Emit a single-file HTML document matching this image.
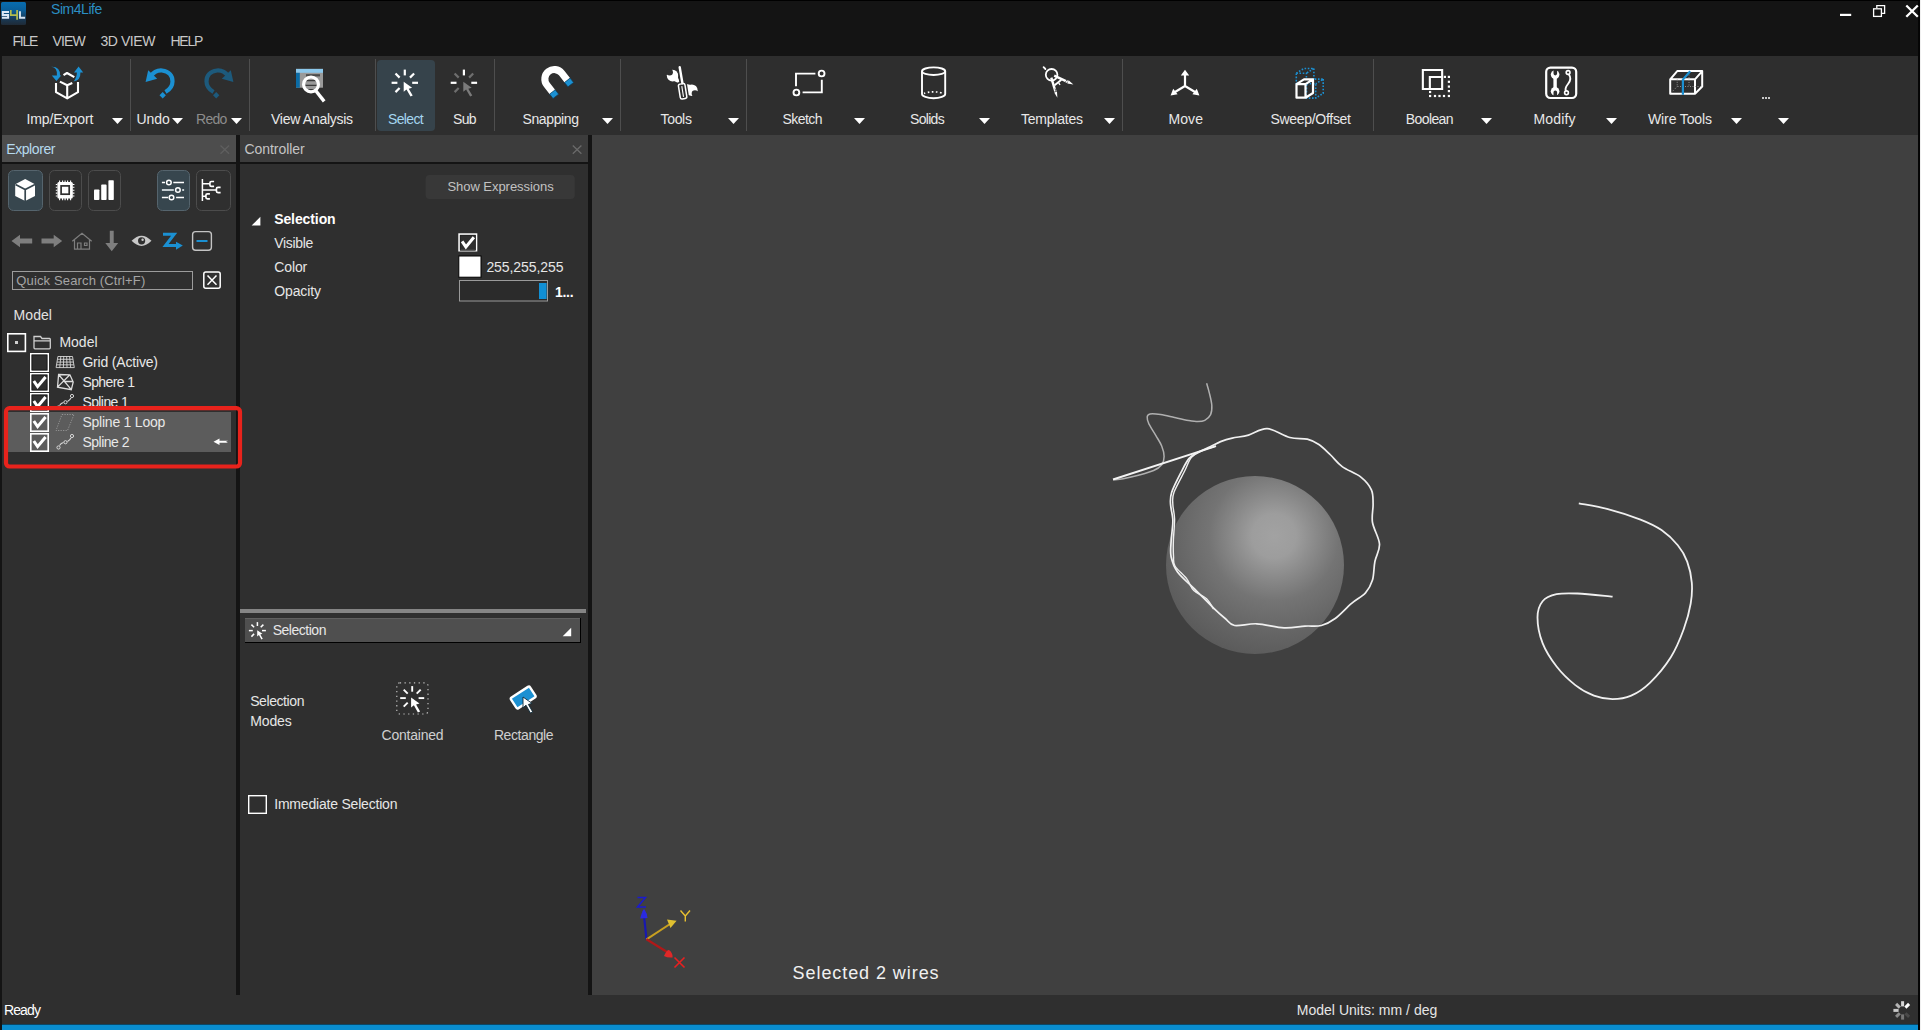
<!DOCTYPE html><html><head><meta charset="utf-8"><style>
html,body{margin:0;padding:0;width:1921px;height:1030px;overflow:hidden;background:#141414;font-family:"Liberation Sans",sans-serif}
body>div{position:absolute}
.t{white-space:nowrap;font-family:"Liberation Sans",sans-serif}
svg{position:absolute;left:0;top:0}
</style></head><body>
<div style="left:0px;top:0px;width:1921px;height:1030px;background:#141414;"></div>
<div style="left:0px;top:0px;width:1920px;height:1px;background:#000;"></div>
<div style="left:1920px;top:0px;width:1px;height:1030px;background:#f0f0f0;"></div>
<div style="left:1918px;top:1px;width:2px;height:1029px;background:#050505;"></div>
<div style="left:2px;top:56px;width:1916px;height:79px;background:#2e2e2e;"></div>
<div style="left:2px;top:135px;width:234px;height:27px;background:#4d4d4d;"></div>
<div style="left:2px;top:164px;width:234px;height:831px;background:#2f2f2f;"></div>
<div style="left:240px;top:135px;width:348px;height:27px;background:#3c3c3c;"></div>
<div style="left:240px;top:164px;width:348px;height:831px;background:#2f2f2f;"></div>
<div style="left:592px;top:135px;width:1326px;height:860px;background:#404040;"></div>
<div style="left:2px;top:995px;width:1916px;height:30px;background:#2f2f2f;"></div>
<div style="left:2px;top:1024px;width:1916px;height:1px;background:#0b4766;"></div>
<div style="left:2px;top:1025px;width:1916px;height:5px;background:#0a8dcf;"></div>
<svg width="1921" height="1030" viewBox="0 0 1921 1030"><defs><linearGradient id="lg" x1="0" y1="0" x2="0" y2="1"><stop offset="0" stop-color="#086db0"/><stop offset="0.35" stop-color="#0a5f9a"/><stop offset="0.7" stop-color="#183c5a"/><stop offset="1" stop-color="#1f2a36"/></linearGradient>
<radialGradient id="sph" cx="0.62" cy="0.36" r="0.75"><stop offset="0" stop-color="#a2a2a2"/><stop offset="0.22" stop-color="#9a9a9a"/><stop offset="0.55" stop-color="#757575"/><stop offset="1" stop-color="#5c5c5c"/></radialGradient></defs>
<rect x="1" y="2" width="25" height="23" rx="1.5" fill="url(#lg)"/>
<path d="M9 12.1H2.8V15H8.1V17.8H1.9" stroke="#dce8f4" stroke-width="2" fill="none"/>
<path d="M10.8 10V15.2H17M17.1 10V19.8" stroke="#b4bc4c" stroke-width="1.7" fill="none"/>
<path d="M20 11.3V17.8H25.1" stroke="#d4e2f0" stroke-width="1.9" fill="none"/>
<rect x="1840" y="13.8" width="11.2" height="2.2" fill="#fff"/>
<path d="M1876.8 8V5.6H1884.6V13.4H1882" stroke="#fff" stroke-width="1.3" fill="none"/><rect x="1873.6" y="8.8" width="7.8" height="7.6" stroke="#fff" stroke-width="1.3" fill="none"/>
<path d="M1906.3 5.5l11.5 11.2M1917.8 5.5l-11.5 11.2" stroke="#fff" stroke-width="2.3"/>
<rect x="130" y="59" width="1" height="72" fill="#4e4e4e"/>
<rect x="249" y="59" width="1" height="72" fill="#4e4e4e"/>
<rect x="375" y="59" width="1" height="72" fill="#4e4e4e"/>
<rect x="494" y="59" width="1" height="72" fill="#4e4e4e"/>
<rect x="620" y="59" width="1" height="72" fill="#4e4e4e"/>
<rect x="746" y="59" width="1" height="72" fill="#4e4e4e"/>
<rect x="1122" y="59" width="1" height="72" fill="#4e4e4e"/>
<rect x="1373" y="59" width="1" height="72" fill="#4e4e4e"/>
<rect x="377" y="60" width="58" height="71" rx="4" fill="#36434b"/>
<path d="M112 118h11l-5.5 6z" fill="#fff"/>
<path d="M172 118h11l-5.5 6z" fill="#fff"/>
<path d="M231 118h11l-5.5 6z" fill="#fff"/>
<path d="M602 118h11l-5.5 6z" fill="#fff"/>
<path d="M728 118h11l-5.5 6z" fill="#fff"/>
<path d="M854 118h11l-5.5 6z" fill="#fff"/>
<path d="M979 118h11l-5.5 6z" fill="#fff"/>
<path d="M1104 118h11l-5.5 6z" fill="#fff"/>
<path d="M1481 118h11l-5.5 6z" fill="#fff"/>
<path d="M1606 118h11l-5.5 6z" fill="#fff"/>
<path d="M1731 118h11l-5.5 6z" fill="#fff"/>
<path d="M1778 118h11l-5.5 6z" fill="#fff"/>
<rect x="1762" y="97" width="2" height="2" fill="#c8c8c8"/>
<rect x="1765" y="97" width="2" height="2" fill="#c8c8c8"/>
<rect x="1768" y="97" width="2" height="2" fill="#c8c8c8"/>
<path d="M56 83V92.2L67.2 98.4 78 92.2V82M59.9 81.6L67.2 85.2 72.3 83M67.2 85V98M63.5 75.2L67 73 74.3 77.2" stroke="#fff" fill="none" stroke-width="2.1" stroke-linejoin="round"/>
<path d="M51.2 66.8Q57.6 67.6 56.9 75.5H51.8L56.4 81 61.2 75.5H60Q60.4 66.4 51.2 66.8Z" fill="#1b90d2"/>
<path d="M73.5 81.5Q76.8 78 76.9 72.6H74L78.6 66.6 83.2 72.6H80.4Q80.8 80.4 73.5 81.5Z" fill="#1b90d2"/>
<path d="M150.5 76.5Q155 70 162 70.5 172.5 72 172.5 81.5 172.5 88 165.5 92" stroke="#1b90d2" stroke-width="4.2" fill="none"/>
<path d="M145.6 82L148.2 70.2 157.2 78.8Z" fill="#1b90d2"/><rect x="160.5" y="93" width="4.5" height="4.5" transform="rotate(45 162.7 95.2)" fill="#1b90d2"/>
<path d="M228.5 76.5Q224 70 217 70.5 206.5 72 206.5 81.5 206.5 88 213.5 92" stroke="#1d5a7c" stroke-width="4.2" fill="none"/>
<path d="M233.4 82L230.8 70.2 221.8 78.8Z" fill="#1d5a7c"/><rect x="214" y="93" width="4.5" height="4.5" transform="rotate(45 216.2 95.2)" fill="#1d5a7c"/>
<rect x="296" y="68.9" width="27" height="18.8" fill="#9a9a9a"/><rect x="296" y="68.9" width="27" height="3.9" fill="#8cc8ec"/><rect x="296" y="72.8" width="3.8" height="14.9" fill="#0b6ca6"/><rect x="306" y="74.2" width="14" height="2.2" fill="#4a4a4a"/><circle cx="311" cy="84.4" r="6" fill="#9a9a9a"/><path d="M305 80.6H317M304.5 85.4H317.5M305.5 89.6H316.5" stroke="#3a3a3a" stroke-width="1.3"/><circle cx="311" cy="84.4" r="7.4" stroke="#fff" stroke-width="3.2" fill="none"/><path d="M315.8 90.8L324.2 101.4" stroke="#fff" stroke-width="3.4"/>
<path d="M404.8 75.4L404.8 69.6" stroke="#fff" stroke-width="2.2"/><path d="M410.0 77.6L414.1 73.5" stroke="#fff" stroke-width="2.2"/><path d="M412.2 82.8L418.0 82.8" stroke="#fff" stroke-width="2.2"/><path d="M397.4 82.8L391.6 82.8" stroke="#fff" stroke-width="2.2"/><path d="M399.6 77.6L395.5 73.5" stroke="#fff" stroke-width="2.2"/><path d="M399.6 88.0L395.5 92.1" stroke="#fff" stroke-width="2.2"/>
<path d="M403.70 81.80 L403.70 91.80 L406.50 89.40 L410.50 96.60 L412.70 95.60 L408.70 88.70 L412.10 87.70Z" fill="#fff"/>
<path d="M463.9 75.4L463.9 69.6" stroke="#fff" stroke-width="2.2"/><path d="M469.1 77.6L473.2 73.5" stroke="#6e6e6e" stroke-width="2.2"/><path d="M471.3 82.8L477.1 82.8" stroke="#fff" stroke-width="2.2"/><path d="M456.5 82.8L450.7 82.8" stroke="#fff" stroke-width="2.2"/><path d="M458.7 77.6L454.6 73.5" stroke="#6e6e6e" stroke-width="2.2"/><path d="M458.7 88.0L454.6 92.1" stroke="#6e6e6e" stroke-width="2.2"/>
<path d="M463.30 81.80 L463.30 91.80 L466.10 89.40 L470.10 96.60 L472.30 95.60 L468.30 88.70 L471.70 87.70Z" fill="#7a7a7a"/>
<g transform="translate(554.3 79) rotate(-38)"><path d="M-9.45 9.2V0A9.45 9.45 0 0 1 9.45 0V9.2" stroke="#fff" stroke-width="7.1" fill="none"/><rect x="-13" y="9" width="7.1" height="5.6" fill="#1b90d2" stroke="#0d3c58" stroke-width="0.6"/><rect x="5.9" y="9" width="7.1" height="5.6" fill="#1b90d2" stroke="#0d3c58" stroke-width="0.6"/></g>
<circle cx="672.6" cy="75.6" r="5.8" fill="#fff"/><circle cx="669.6" cy="72.2" r="3.3" fill="#2e2e2e"/><path d="M671 79.5L676.5 74 680 82 678.2 83Z" fill="#fff"/><circle cx="691.8" cy="90.2" r="5.8" fill="#fff"/><circle cx="695" cy="93.6" r="3.3" fill="#2e2e2e"/><path d="M686.5 84L693 85.5 688.5 92 685.5 85.5Z" fill="#fff"/>
<path d="M679.6 66.5L682.2 83" stroke="#2e2e2e" stroke-width="5.5"/><g transform="rotate(-9 682.6 91.2)"><rect x="678.9" y="83.4" width="7.4" height="15.6" rx="2" stroke="#2e2e2e" stroke-width="3.5" fill="#2e2e2e"/></g>
<path d="M679.7 67.2L682.4 83" stroke="#fff" stroke-width="2.4" stroke-linecap="round" fill="none"/><g transform="rotate(-9 682.6 91.2)"><rect x="679.3" y="83.8" width="6.6" height="15" rx="1.8" stroke="#fff" stroke-width="1.5" fill="none"/><path d="M682.6 86V97" stroke="#fff" stroke-width="1.1"/></g>
<path d="M815.4 73.6H796V86.3M802.6 92.4H821.8V79.7" stroke="#fff" stroke-width="1.9" fill="none"/><circle cx="821.6" cy="73.5" r="2.9" stroke="#fff" stroke-width="1.9" fill="none"/><circle cx="796.4" cy="92.5" r="2.9" stroke="#fff" stroke-width="1.9" fill="none"/>
<ellipse cx="933.6" cy="71.2" rx="11.6" ry="3.8" stroke="#fff" stroke-width="1.9" fill="none"/><path d="M922 71.2V94A11.6 4.2 0 0 0 945.2 94V71.2" stroke="#fff" stroke-width="1.9" fill="none"/><path d="M924 93.5A11 3.2 0 0 1 943.2 93.5" stroke="#fff" stroke-width="1.6" stroke-dasharray="1.6 2.4" fill="none"/>
<circle cx="1051.6" cy="74.8" r="5.8" stroke="#fff" stroke-width="1.8" fill="none"/><path d="M1043.6 67.2L1045.4 69" stroke="#fff" stroke-width="1.8" stroke-linecap="round"/><path d="M1051.3 77.6L1055.4 91.3" stroke="#fff" stroke-width="2.4"/><path d="M1054.2 92.5L1057.4 97.8 1057 91.6Z" fill="#fff"/><path d="M1054.2 75.6L1067.6 81.8" stroke="#fff" stroke-width="2.4"/><path d="M1068.6 80.2L1073.4 84.4 1067.3 83.6Z" fill="#fff"/><path d="M1054.6 85.2L1061.4 79.8" stroke="#fff" stroke-width="1.8"/><path d="M1058.5 82.5l1.5 2.5" stroke="#fff" stroke-width="1.4"/><path d="M1055.8 90.8l-.8-2.2M1067.2 80l-1.8 1.6" stroke="#2e2e2e" stroke-width="0.8"/>
<path d="M1185 86V74M1185 86L1175 92M1185 86L1195 92" stroke="#fff" stroke-width="2.2"/><path d="M1180.8 75.5L1185 69.8 1189.2 75.5Z M1170.6 95.5L1173.2 88.8 1177.6 94.2Z M1199.4 95.5L1196.8 88.8 1192.4 94.2Z" fill="#fff"/>
<path d="M1296.3 73.2H1306.3999999999999V83.2H1296.3Z M1296.3 73.2L1303.8 68.5H1313.8999999999999L1306.3999999999999 73.2 M1313.8999999999999 68.5V78.5L1306.3999999999999 83.2" stroke="#1b90d2" stroke-width="1.6" stroke-dasharray="1.6 1.6" fill="none"/>
<path d="M1306.5 83.8H1315.7V98.1H1306.5Z M1306.5 83.8L1314.0 79.1H1323.2L1315.7 83.8 M1323.2 79.1V93.39999999999999L1315.7 98.1" stroke="#1b90d2" stroke-width="1.6" stroke-dasharray="1.6 1.6" fill="none"/>
<path d="M1296.5 84.1H1305.5V97.69999999999999H1296.5Z M1296.5 84.1L1304.0 79.39999999999999H1313.0L1305.5 84.1 M1313.0 79.39999999999999V92.99999999999999L1305.5 97.69999999999999" stroke="#fff" stroke-width="2.2" fill="#2e2e2e" stroke-linejoin="round"/>
<path d="M1422.85 69.95H1442.15V88.95H1422.85Z M1429.85 88.95V76.95H1442.15" stroke="#fff" stroke-width="2.1" fill="none"/><rect x="1443.8" y="75.8" width="2.2" height="2.2" fill="#fff"/><rect x="1447.8" y="75.8" width="2.2" height="2.2" fill="#fff"/><rect x="1447.8" y="80.7" width="2.2" height="2.2" fill="#fff"/><rect x="1447.8" y="85.5" width="2.2" height="2.2" fill="#fff"/><rect x="1447.8" y="90.0" width="2.2" height="2.2" fill="#fff"/><rect x="1447.8" y="94.9" width="2.2" height="2.2" fill="#fff"/><rect x="1429.0" y="94.9" width="2.2" height="2.2" fill="#fff"/><rect x="1433.9" y="94.9" width="2.2" height="2.2" fill="#fff"/><rect x="1438.4" y="94.9" width="2.2" height="2.2" fill="#fff"/><rect x="1442.9" y="94.9" width="2.2" height="2.2" fill="#fff"/><rect x="1429.0" y="90.9" width="2.2" height="2.2" fill="#fff"/>
<rect x="1546.2" y="67.6" width="30" height="30.4" rx="4.2" stroke="#fff" stroke-width="2.2" fill="none"/><circle cx="1555.1" cy="74.6" r="4.3" fill="#fff"/><circle cx="1555.1" cy="91.2" r="4.3" fill="#fff"/><rect x="1553.4" y="76" width="3.4" height="14" fill="#fff"/><path d="M1553.5 69.5V73.6A1.8 1.8 0 0 0 1557.1 73.6V69.5Z M1553.5 96.5V92.2A1.8 1.8 0 0 1 1557.1 92.2V96.5Z" fill="#2e2e2e"/><circle cx="1568.1" cy="72.5" r="1.9" stroke="#fff" stroke-width="1.6" fill="none"/><circle cx="1566.5" cy="92.8" r="1.9" stroke="#fff" stroke-width="1.6" fill="none"/><path d="M1568.8 74.3C1571.5 78 1570.5 81 1568 84C1565.2 87.5 1564.8 89 1566 91" stroke="#fff" stroke-width="1.9" fill="none"/>
<path d="M1670.2 79.3H1695V93.8H1670.2Z M1670.2 79.3L1677.2 71.1H1702.2L1695 79.3 M1702.2 71.1V86.5L1695 93.8" stroke="#fff" stroke-width="2" fill="none" stroke-linejoin="round"/><path d="M1677.2 79.3V86.5H1702 M1677.2 86.5L1670.2 93.8 M1689 72V86.5" stroke="#aaa" stroke-width="0.8" stroke-dasharray="1 1.5" fill="none"/><path d="M1682.9 94.8V79.6L1690.2 71.2" stroke="#1b90d2" stroke-width="2.2" fill="none"/>
<path d="M220.5 145.5l8.6 8.2M229.1 145.5l-8.6 8.2" stroke="#5f5f5f" stroke-width="1.3"/>
<path d="M572.8 145.5l8.6 8.2M581.4 145.5l-8.6 8.2" stroke="#6a6a6a" stroke-width="1.3"/>
<rect x="8.5" y="170.5" width="34" height="40" rx="5" fill="#37464e" stroke="#55646d" stroke-width="1"/>
<rect x="49.5" y="170.5" width="32" height="40" rx="5" fill="none" stroke="#4c4c4c" stroke-width="1"/>
<rect x="88.5" y="170.5" width="32" height="40" rx="5" fill="none" stroke="#4c4c4c" stroke-width="1"/>
<rect x="157.5" y="170.5" width="32" height="40" rx="5" fill="#37464e" stroke="#55646d" stroke-width="1"/>
<rect x="196.5" y="170.5" width="34" height="40" rx="5" fill="none" stroke="#4c4c4c" stroke-width="1"/>
<path d="M25.2 179L35 184.2V196L25.2 201 15.2 196V184.2Z" fill="#fff"/><path d="M15.5 184.5L25.2 189.5 35 184.5M25.2 189.5V201" stroke="#37464e" stroke-width="1.7" fill="none"/>
<rect x="57.4" y="182" width="15.4" height="16.4" rx="1.5" fill="#fff"/><rect x="61.1" y="185.9" width="8.1" height="8.3" stroke="#2f2f2f" stroke-width="1.7" fill="none"/><path d="M59.6 180.6V200.2M62.6 180.6V200.2M65.1 180.6V200.2M67.6 180.6V200.2M70.6 180.6V200.2M55.8 184.5H74.4M55.8 187.3H74.4M55.8 190.2H74.4M55.8 193.1H74.4M55.8 196H74.4" stroke="#fff" stroke-width="1.1" stroke-dasharray="1.6 20"/><path d="M59.6 200.2V198M62.6 200.2V198M65.1 200.2V198M67.6 200.2V198M70.6 200.2V198M74.4 184.5H72.4M74.4 187.3H72.4M74.4 190.2H72.4M74.4 193.1H72.4M74.4 196H72.4" stroke="#fff" stroke-width="1.1"/>
<rect x="94" y="189.5" width="5.4" height="10.5" rx="0.8" fill="#fff"/><rect x="101.2" y="184.6" width="5.4" height="15.4" rx="0.8" fill="#fff"/><rect x="108.4" y="180.2" width="5.4" height="19.8" rx="0.8" fill="#fff"/>
<path d="M161.9 182.55H165M173.3 182.55H184M176.1 197.5H184M161.9 197.5H168" stroke="#fff" stroke-width="1.5"/><path d="M161.9 190H173.8" stroke="#c6ced2" stroke-width="2"/><rect x="182.2" y="189" width="1.9" height="2" fill="#c6ced2"/><circle cx="168.9" cy="182.55" r="2.3" stroke="#fff" stroke-width="1.5" fill="none"/><circle cx="177.9" cy="190" r="2.3" stroke="#fff" stroke-width="1.5" fill="none"/><circle cx="171.5" cy="197.5" r="2.3" stroke="#fff" stroke-width="1.5" fill="none"/>
<path d="M202.4 179V201M202.4 183.7H209.4M202.4 190H216M202.4 196.3H205.8" stroke="#fff" stroke-width="1.5"/><path d="M214.1 181.5H211.5Q209.9 181.5 209.9 183V184.9Q209.9 186.4 211.5 186.4H214.1M220.6 187.4H218Q216.4 187.4 216.4 188.9V191.1Q216.4 192.7 218 192.7H220.6M209.9 193.8H207.4Q205.9 193.8 205.9 195.3V197.3Q205.9 198.8 207.4 198.8H209.9" stroke="#fff" stroke-width="1.7" fill="none"/>
<path d="M11.5 241L20 234.7V238.5H32.2V243.5H20V247.3Z" fill="#7e7e7e"/>
<path d="M62.2 241L53.7 234.7V238.5H41.5V243.5H53.7V247.3Z" fill="#7e7e7e"/>
<path d="M72.3 241.3L82 233.3 91.7 241.3M74.5 240V249.2H89.5V240 M77.5 249.2V243H81V249.2 M84.5 243H87V245.5H84.5Z" stroke="#7e7e7e" stroke-width="1.2" fill="none"/>
<path d="M109.8 230.7H113.7V243H118.2L111.75 251.3 105.3 243H109.8Z" fill="#7e7e7e"/>
<path d="M131.6 240.8Q141.5 230.5 151.5 240.8 141.5 251 131.6 240.8Z" fill="#c8c8c8"/><circle cx="141.6" cy="240.8" r="3.6" fill="#2f2f2f"/><circle cx="142.6" cy="239.8" r="1.2" fill="#c8c8c8"/>
<path d="M163 234.2H174.2L165.5 245.5H176" stroke="#1b90d2" stroke-width="3" fill="none" stroke-linejoin="miter"/><path d="M176 241.8L182.8 245.5 176 249.7Z" fill="#1b90d2"/>
<rect x="192.6" y="231.6" width="18.8" height="18.6" rx="3" stroke="#c4c4c4" stroke-width="1.4" fill="none"/><path d="M196.5 241H207.5" stroke="#1b90d2" stroke-width="2"/>
<rect x="12.5" y="271.5" width="180" height="18" stroke="#9c9c9c" stroke-width="1" fill="none"/>
<rect x="203.8" y="272" width="16.4" height="16.2" rx="2" stroke="#fff" stroke-width="1.5" fill="none"/><path d="M207.5 275.5l9 9.2M216.5 275.5l-9 9.2" stroke="#fff" stroke-width="1.5"/>
<rect x="8" y="412" width="223" height="40" fill="#5c5c5c"/>
<rect x="7.8" y="333.8" width="17.6" height="17.6" stroke="#fff" stroke-width="1.6" fill="none"/><rect x="15" y="341" width="3" height="3" fill="#d0d0d0"/>
<path d="M34 336.5H40.5L42 338.5H49.5A1 1 0 0 1 50.3 339.5V347.8A1 1 0 0 1 49.3 348.8H35A1 1 0 0 1 34 347.8Z M34 340.8H50.3" stroke="#cfcfcf" stroke-width="1.3" fill="none"/>
<rect x="30.8" y="353.8" width="17.4" height="17.4" stroke="#fff" stroke-width="1.6" fill="none"/><rect x="32" y="355" width="15" height="15" stroke="#181818" stroke-width="0.8" fill="none"/>
<rect x="30.8" y="373.8" width="17.4" height="17.4" stroke="#fff" stroke-width="1.6" fill="none"/><rect x="32" y="375" width="15" height="15" stroke="#181818" stroke-width="0.8" fill="none"/><path d="M33.8 381L37.6 386.6L45.6 377" stroke="#fff" stroke-width="3" fill="none"/>
<rect x="30.8" y="393.8" width="17.4" height="17.4" stroke="#fff" stroke-width="1.6" fill="none"/><rect x="32" y="395" width="15" height="15" stroke="#181818" stroke-width="0.8" fill="none"/><path d="M33.8 401L37.6 406.6L45.6 397" stroke="#fff" stroke-width="3" fill="none"/>
<rect x="30.8" y="413.8" width="17.4" height="17.4" stroke="#fff" stroke-width="1.6" fill="none"/><path d="M33.8 421L37.6 426.6L45.6 417" stroke="#fff" stroke-width="3" fill="none"/>
<rect x="30.8" y="433.8" width="17.4" height="17.4" stroke="#fff" stroke-width="1.6" fill="none"/><path d="M33.8 441L37.6 446.6L45.6 437" stroke="#fff" stroke-width="3" fill="none"/>
<path d="M57.90 356.5L56.10 367.6M60.82 356.5L59.74 367.6M63.74 356.5L63.38 367.6M66.66 356.5L67.02 367.6M69.58 356.5L70.66 367.6M72.50 356.5L74.30 367.6M57.90 356.50H72.50M57.45 359.27H72.95M57.00 362.05H73.40M56.55 364.83H73.85M56.10 367.60H74.30" stroke="#d8d8d8" stroke-width="0.9" fill="none"/>
<path d="M58.6 374.5L69.9 374.8 73.2 382.1 71.3 389.7 57.5 387.1Z M58.6 374.5L71.3 389.7 M69.9 374.8L57.5 387.1 M64.5 381.5H73" stroke="#dcdcdc" stroke-width="1.3" fill="none"/>
<circle cx="58.5" cy="407.5" r="1.6" stroke="#d8d8d8" stroke-width="1" fill="none"/><circle cx="65.5" cy="402.2" r="1.6" stroke="#d8d8d8" stroke-width="1" fill="none"/><circle cx="72" cy="396" r="1.6" stroke="#d8d8d8" stroke-width="1" fill="none"/><path d="M59.5 405.5Q61 403 63.5 402.5M67.5 401.5Q70 400 71 398" stroke="#d8d8d8" stroke-width="1.1" fill="none"/>
<circle cx="58.5" cy="447.5" r="1.6" stroke="#d8d8d8" stroke-width="1" fill="none"/><circle cx="65.5" cy="442.2" r="1.6" stroke="#d8d8d8" stroke-width="1" fill="none"/><circle cx="72" cy="436" r="1.6" stroke="#d8d8d8" stroke-width="1" fill="none"/><path d="M59.5 445.5Q61 443 63.5 442.5M67.5 441.5Q70 440 71 438" stroke="#d8d8d8" stroke-width="1.1" fill="none"/>
<path d="M62 414.5H74L67.5 430.5H56Z" stroke="#9a9a9a" stroke-width="0.9" stroke-dasharray="1.2 1.3" fill="none"/>
<path d="M213.5 441.8L219.5 438.5V440.8H228L226 441.8 228 442.8H219.5V445Z" fill="#fff"/>
<rect x="425.6" y="175" width="149.2" height="24" rx="4" fill="#383838"/>
<path d="M251.6 225.5H260.4V216.8Z" fill="#fff"/>
<rect x="459.1" y="234.10000000000002" width="17.4" height="16.6" stroke="#fff" stroke-width="1.6" fill="none"/><rect x="460.3" y="235.3" width="15" height="15" stroke="#222" stroke-width="0.8" fill="none"/><path d="M462.1 241.3L465.90000000000003 246.9L473.90000000000003 237.3" stroke="#fff" stroke-width="3" fill="none"/>
<rect x="458.8" y="256" width="22.2" height="21.2" fill="#fff" stroke="#000" stroke-width="1"/>
<rect x="459.5" y="280.5" width="88" height="20.5" fill="#2b2b2b" stroke="#9a9a9a" stroke-width="1"/><rect x="539" y="283" width="7.6" height="16" fill="#118fd4"/>
<rect x="240" y="609" width="346" height="4" fill="#858585"/>
<rect x="245" y="618" width="336" height="25" fill="#000"/><rect x="245" y="618" width="335" height="24" fill="#4f4f4f"/><rect x="245" y="618" width="335" height="1" fill="#606060"/>
<path d="M257.4 626.0L257.4 622.1" stroke="#fff" stroke-width="1.5"/><path d="M260.7 627.3L263.4 624.6" stroke="#fff" stroke-width="1.5"/><path d="M262.0 630.6L265.9 630.6" stroke="#fff" stroke-width="1.5"/><path d="M252.8 630.6L248.9 630.6" stroke="#fff" stroke-width="1.5"/><path d="M254.1 627.3L251.4 624.6" stroke="#fff" stroke-width="1.5"/><path d="M254.1 633.9L251.4 636.6" stroke="#fff" stroke-width="1.5"/>
<path d="M257.20 630.20 L257.20 636.40 L258.94 634.91 L261.42 639.38 L262.78 638.76 L260.30 634.48 L262.41 633.86Z" fill="#fff"/>
<path d="M562.7 636.3H571.2V627.8Z" fill="#fff"/>
<rect x="396.8" y="682.8" width="31.2" height="31.2" rx="3" stroke="#bdbdbd" stroke-width="1.2" stroke-dasharray="1.3 3.4" fill="none"/>
<path d="M412.2 691.7L412.2 686.1" stroke="#fff" stroke-width="1.9"/><path d="M416.7 693.6L420.7 689.6" stroke="#fff" stroke-width="1.9"/><path d="M418.6 698.1L424.2 698.1" stroke="#fff" stroke-width="1.9"/><path d="M405.8 698.1L400.2 698.1" stroke="#fff" stroke-width="1.9"/><path d="M407.7 693.6L403.7 689.6" stroke="#fff" stroke-width="1.9"/><path d="M407.7 702.6L403.7 706.6" stroke="#fff" stroke-width="1.9"/>
<path d="M411.10 697.60 L411.10 707.60 L413.90 705.20 L417.90 712.40 L420.10 711.40 L416.10 704.50 L419.50 703.50Z" fill="#fff"/>
<g transform="rotate(-33 523.2 697.5)"><rect x="511.9" y="691.2" width="22.6" height="12.6" rx="1.5" fill="#1b90d2" stroke="#fff" stroke-width="2.4"/></g>
<path d="M523.00 697.00 L523.00 707.80 L526.02 705.21 L530.34 712.98 L532.72 711.90 L528.40 704.45 L532.07 703.37Z" fill="#fff" stroke="#0d2a3a" stroke-width="0.9"/>
<rect x="248.7" y="795.7" width="17.6" height="17.6" stroke="#fff" stroke-width="1.4" fill="none"/>
<path d="M1902.6 1006.4L1902.6 1001.2" stroke="#d8d8d8" stroke-width="3"/>
<path d="M1905.4 1007.6L1909.1 1003.9" stroke="#ffffff" stroke-width="3"/>
<path d="M1905.4 1013.2L1909.1 1016.9" stroke="#4a4a4a" stroke-width="3"/>
<path d="M1902.6 1014.4L1902.6 1019.6" stroke="#777" stroke-width="3"/>
<path d="M1899.8 1013.2L1896.1 1016.9" stroke="#8a8a8a" stroke-width="3"/>
<path d="M1898.6 1010.4L1893.4 1010.4" stroke="#c8c8c8" stroke-width="3"/>
<path d="M1899.8 1007.6L1896.1 1003.9" stroke="#b4b4b4" stroke-width="3"/>
<radialGradient id="sph2" gradientUnits="userSpaceOnUse" cx="1274" cy="536" r="130"><stop offset="0" stop-color="#a2a2a2"/><stop offset="0.17" stop-color="#9d9d9d"/><stop offset="0.32" stop-color="#8a8a8a"/><stop offset="0.5" stop-color="#747474"/><stop offset="0.75" stop-color="#656565"/><stop offset="1" stop-color="#585858"/></radialGradient>
<circle cx="1255" cy="565" r="89" fill="url(#sph2)"/>
<path d="M1267.2 428.7C1274.1 429.1 1283.1 435.8 1289.8 437.5C1296.5 439.2 1302.4 438.0 1307.3 439.2C1312.2 440.4 1315.0 441.9 1318.9 444.5C1322.8 447.1 1326.7 451.3 1330.6 455.0C1334.5 458.7 1337.2 462.9 1342.2 466.6C1347.2 470.3 1356.0 473.2 1360.9 477.1C1365.8 481.0 1369.4 485.4 1371.4 489.9C1373.4 494.4 1372.9 498.5 1373.1 503.9C1373.3 509.3 1371.4 515.8 1372.5 522.5C1373.6 529.2 1379.1 537.5 1379.5 544.0C1379.9 550.5 1376.1 555.5 1374.9 561.5C1373.7 567.5 1374.1 574.9 1372.5 580.1C1370.9 585.3 1369.0 589.0 1365.5 592.9C1362.0 596.8 1356.6 599.1 1351.6 603.4C1346.5 607.7 1340.2 614.8 1335.2 618.5C1330.2 622.2 1326.3 624.2 1321.3 625.5C1316.3 626.8 1311.2 625.7 1305.0 626.1C1298.8 626.5 1292.0 628.3 1284.0 627.9C1276.0 627.5 1264.9 624.2 1256.7 623.8C1248.5 623.4 1239.8 626.4 1234.6 625.5C1229.3 624.6 1228.7 621.4 1225.2 618.5C1221.7 615.6 1218.6 613.0 1213.6 608.1C1208.6 603.2 1201.0 595.4 1195.0 589.4C1189.0 583.4 1181.5 577.3 1177.5 571.9C1173.5 566.5 1172.2 561.8 1171.1 556.8C1170.0 551.8 1170.9 546.2 1171.1 541.7C1171.3 537.2 1171.9 533.8 1172.2 530.0C1172.5 526.2 1173.1 523.4 1172.8 519.0C1172.5 514.6 1170.7 508.4 1170.5 503.9C1170.3 499.4 1170.0 497.4 1171.7 492.2C1173.5 486.9 1178.1 478.0 1181.0 472.4C1183.9 466.8 1186.2 461.8 1189.1 458.4C1192.0 455.0 1194.9 453.9 1198.4 452.0C1201.9 450.1 1206.4 448.5 1210.1 446.8C1213.8 445.1 1216.9 443.1 1220.6 441.6C1224.3 440.2 1227.5 439.2 1232.2 438.1C1236.9 437.0 1242.7 436.7 1248.5 435.1C1254.3 433.5 1260.3 428.3 1267.2 428.7Z" stroke="#f0f0f0" stroke-width="1.7" fill="none"/>
<path d="M1215.9 446.2C1213.6 447.0 1206.1 449.0 1202.0 450.9C1197.9 452.8 1194.4 453.9 1191.5 457.3C1188.6 460.7 1187.4 465.5 1184.5 471.3C1181.6 477.1 1176.0 486.8 1174.0 492.2C1172.0 497.6 1172.7 499.4 1172.8 503.9C1172.9 508.4 1174.5 513.0 1174.6 519.0C1174.7 525.0 1173.6 533.8 1173.4 540.0C1173.2 546.2 1173.2 551.7 1173.5 556.0C1173.8 560.3 1172.8 562.2 1175.0 566.0C1177.2 569.8 1183.7 574.8 1186.8 578.9C1189.9 583.0 1190.5 587.3 1193.8 590.6C1197.1 593.9 1203.3 595.6 1206.6 598.7C1209.9 601.8 1212.4 607.5 1213.6 609.2" stroke="#eeeeee" stroke-width="1.4" fill="none"/>
<path d="M1206.6 383.2C1207.1 384.9 1208.6 389.9 1209.5 393.6C1210.4 397.3 1211.6 401.8 1211.8 405.3C1212.0 408.8 1211.8 412.1 1210.6 414.6C1209.4 417.1 1206.9 419.2 1204.8 420.4C1202.7 421.6 1200.5 421.6 1197.8 421.6C1195.1 421.6 1192.4 421.1 1188.5 420.4C1184.6 419.7 1179.2 418.5 1174.5 417.5C1169.8 416.5 1164.7 415.2 1160.6 414.6C1156.5 414.0 1152.3 413.6 1150.1 414.0C1147.9 414.4 1147.4 415.2 1147.2 416.9C1147.0 418.5 1147.5 420.8 1148.9 423.9C1150.4 427.0 1153.8 431.9 1155.9 435.6C1158.0 439.3 1160.3 442.5 1161.7 446.0C1163.1 449.5 1164.1 453.4 1164.1 456.5C1164.1 459.6 1163.5 462.4 1161.7 464.7C1160.0 467.0 1157.5 468.8 1153.6 470.5C1149.7 472.2 1143.5 473.8 1138.4 475.2C1133.4 476.6 1127.5 477.9 1123.3 478.7C1119.1 479.5 1115.1 479.6 1113.4 479.8" stroke="#b0b0b0" stroke-width="1.5" fill="none"/>
<path d="M1113 479.5L1216 446.2" stroke="#f4f4f4" stroke-width="1.9" fill="none"/>
<path d="M1578.8 503.3C1583.7 504.3 1597.6 506.4 1607.9 509.1C1618.2 511.8 1631.6 516.1 1640.5 519.6C1649.4 523.1 1655.3 525.8 1661.5 530.1C1667.7 534.4 1673.5 540.0 1677.8 545.3C1682.1 550.5 1684.9 555.4 1687.2 561.6C1689.5 567.8 1691.2 575.6 1691.8 582.6C1692.4 589.6 1692.0 595.7 1690.7 603.5C1689.4 611.3 1687.0 620.2 1683.7 629.2C1680.4 638.2 1676.4 648.3 1670.8 657.2C1665.2 666.1 1656.5 676.4 1649.9 682.8C1643.3 689.2 1637.4 692.9 1631.2 695.6C1625.0 698.3 1618.8 699.1 1612.6 699.1C1606.4 699.1 1600.1 697.9 1593.9 695.6C1587.7 693.3 1581.5 690.0 1575.3 685.1C1569.1 680.2 1562.0 673.5 1556.6 666.5C1551.1 659.5 1545.8 651.4 1542.6 643.2C1539.4 635.0 1537.5 624.5 1537.5 617.5C1537.5 610.5 1539.4 605.1 1542.6 601.2C1545.8 597.3 1550.8 595.5 1556.6 594.2C1562.4 592.9 1568.3 593.1 1577.6 593.5C1586.9 593.9 1606.8 596.1 1612.6 596.6" stroke="#f0f0f0" stroke-width="1.8" fill="none"/>
<path d="M646.5 939.3L644 916" stroke="#1818b0" stroke-width="2.2"/><path d="M640.2 918.5Q643 908 644.5 909.5 647.5 914 647.5 918Z" fill="#2a2ae0"/>
<path d="M646.5 939.3L670 924" stroke="#c8a020" stroke-width="2"/><path d="M667 919.5L676.6 920.7 670.5 928Z" fill="#e0c030"/>
<path d="M646.5 939.3L667 952" stroke="#b01818" stroke-width="2.2"/><path d="M664 956Q667 949 669 950 673 953 672.5 957.5 667.5 958 664 956Z" fill="#e02828"/>
<path d="M637.5 897.5H645.5L637.5 907H646" stroke="#1a1ad0" stroke-width="1.5" fill="none"/>
<path d="M680.5 910.5L685.3 916M690 910.5L685.3 916V921.5" stroke="#e8c030" stroke-width="1.4" fill="none"/>
<path d="M674.5 957.5L684.5 967.5M684.5 957.5L674.5 967.5" stroke="#e82020" stroke-width="1.6" fill="none"/></svg>
<div class="t" style="left:51px;top:2px;font-size:14px;line-height:14px;color:#2b8fc4;font-weight:normal;letter-spacing:-0.45px;">Sim4Life</div>
<div class="t" style="left:12.5px;top:34px;font-size:14px;line-height:14px;color:#c8c8c8;font-weight:normal;letter-spacing:-1.266px;">FILE</div>
<div class="t" style="left:52.5px;top:34px;font-size:14px;line-height:14px;color:#c8c8c8;font-weight:normal;letter-spacing:-0.82px;">VIEW</div>
<div class="t" style="left:100.5px;top:34px;font-size:14px;line-height:14px;color:#c8c8c8;font-weight:normal;letter-spacing:-0.438px;">3D VIEW</div>
<div class="t" style="left:170.5px;top:34px;font-size:14px;line-height:14px;color:#c8c8c8;font-weight:normal;letter-spacing:-1.268px;">HELP</div>
<div class="t" style="left:26.4px;top:112px;font-size:14px;line-height:14px;color:#e8e8e8;font-weight:normal;letter-spacing:-0.069px;">Imp/Export</div>
<div class="t" style="left:136.4px;top:112px;font-size:14px;line-height:14px;color:#e8e8e8;font-weight:normal;letter-spacing:-0.017px;">Undo</div>
<div class="t" style="left:196px;top:112px;font-size:14px;line-height:14px;color:#8c8c8c;font-weight:normal;letter-spacing:-0.692px;">Redo</div>
<div class="t" style="left:271px;top:112px;font-size:14px;line-height:14px;color:#e8e8e8;font-weight:normal;letter-spacing:-0.272px;">View Analysis</div>
<div class="t" style="left:388px;top:112px;font-size:14px;line-height:14px;color:#a4d6f0;font-weight:normal;letter-spacing:-0.652px;">Select</div>
<div class="t" style="left:453px;top:112px;font-size:14px;line-height:14px;color:#e8e8e8;font-weight:normal;letter-spacing:-0.636px;">Sub</div>
<div class="t" style="left:522.5px;top:112px;font-size:14px;line-height:14px;color:#e8e8e8;font-weight:normal;letter-spacing:-0.383px;">Snapping</div>
<div class="t" style="left:660.5px;top:112px;font-size:14px;line-height:14px;color:#e8e8e8;font-weight:normal;letter-spacing:-0.317px;">Tools</div>
<div class="t" style="left:782.6px;top:112px;font-size:14px;line-height:14px;color:#e8e8e8;font-weight:normal;letter-spacing:-0.583px;">Sketch</div>
<div class="t" style="left:910px;top:112px;font-size:14px;line-height:14px;color:#e8e8e8;font-weight:normal;letter-spacing:-0.689px;">Solids</div>
<div class="t" style="left:1021px;top:112px;font-size:14px;line-height:14px;color:#e8e8e8;font-weight:normal;letter-spacing:-0.234px;">Templates</div>
<div class="t" style="left:1168.6px;top:112px;font-size:14px;line-height:14px;color:#e8e8e8;font-weight:normal;letter-spacing:0.041px;">Move</div>
<div class="t" style="left:1270.4px;top:112px;font-size:14px;line-height:14px;color:#e8e8e8;font-weight:normal;letter-spacing:-0.29px;">Sweep/Offset</div>
<div class="t" style="left:1405.8px;top:112px;font-size:14px;line-height:14px;color:#e8e8e8;font-weight:normal;letter-spacing:-0.597px;">Boolean</div>
<div class="t" style="left:1533.6px;top:112px;font-size:14px;line-height:14px;color:#e8e8e8;font-weight:normal;letter-spacing:0.111px;">Modify</div>
<div class="t" style="left:1648px;top:112px;font-size:14px;line-height:14px;color:#e8e8e8;font-weight:normal;letter-spacing:-0.119px;">Wire Tools</div>
<div class="t" style="left:6.25px;top:142px;font-size:14px;line-height:14px;color:#b6daee;font-weight:normal;letter-spacing:-0.423px;">Explorer</div>
<div class="t" style="left:244.4px;top:142px;font-size:14px;line-height:14px;color:#c4c4c4;font-weight:normal;letter-spacing:-0.039px;">Controller</div>
<div class="t" style="left:16.3px;top:274px;font-size:13px;line-height:13px;color:#a4a4a4;font-weight:normal;letter-spacing:0.145px;">Quick Search (Ctrl+F)</div>
<div class="t" style="left:13.6px;top:308px;font-size:14px;line-height:14px;color:#e2e2e2;font-weight:normal;letter-spacing:0.054px;">Model</div>
<div class="t" style="left:59.4px;top:335px;font-size:14px;line-height:14px;color:#e6e6e6;font-weight:normal;letter-spacing:0.014px;">Model</div>
<div class="t" style="left:82.4px;top:355px;font-size:14px;line-height:14px;color:#e8e8e8;font-weight:normal;letter-spacing:-0.184px;">Grid (Active)</div>
<div class="t" style="left:82.4px;top:375px;font-size:14px;line-height:14px;color:#e8e8e8;font-weight:normal;letter-spacing:-0.602px;">Sphere 1</div>
<div class="t" style="left:82.4px;top:395px;font-size:14px;line-height:14px;color:#e8e8e8;font-weight:normal;letter-spacing:-0.587px;">Spline 1</div>
<div class="t" style="left:82.4px;top:415px;font-size:14px;line-height:14px;color:#e8e8e8;font-weight:normal;letter-spacing:-0.225px;">Spline 1 Loop</div>
<div class="t" style="left:82.4px;top:435px;font-size:14px;line-height:14px;color:#e8e8e8;font-weight:normal;letter-spacing:-0.487px;">Spline 2</div>
<div class="t" style="left:447.4px;top:180px;font-size:13px;line-height:13px;color:#c2c2c2;font-weight:normal;letter-spacing:-0.04px;">Show Expressions</div>
<div class="t" style="left:274.2px;top:212px;font-size:14px;line-height:14px;color:#ffffff;font-weight:bold;letter-spacing:-0.1px;">Selection</div>
<div class="t" style="left:274.2px;top:235.5px;font-size:14px;line-height:14px;color:#e6e6e6;font-weight:normal;letter-spacing:-0.313px;">Visible</div>
<div class="t" style="left:274.2px;top:259.5px;font-size:14px;line-height:14px;color:#e6e6e6;font-weight:normal;letter-spacing:-0.091px;">Color</div>
<div class="t" style="left:274.2px;top:283.5px;font-size:14px;line-height:14px;color:#e6e6e6;font-weight:normal;letter-spacing:-0.094px;">Opacity</div>
<div class="t" style="left:486.4px;top:260px;font-size:14px;line-height:14px;color:#e6e6e6;font-weight:normal;letter-spacing:-0.068px;">255,255,255</div>
<div class="t" style="left:555px;top:284.5px;font-size:14px;line-height:14px;color:#ffffff;font-weight:bold;letter-spacing:-0.3px;">1...</div>
<div class="t" style="left:272.7px;top:622.6px;font-size:14px;line-height:14px;color:#e8e8e8;font-weight:normal;letter-spacing:-0.477px;">Selection</div>
<div class="t" style="left:250.2px;top:694px;font-size:14px;line-height:14px;color:#e6e6e6;font-weight:normal;letter-spacing:-0.421px;">Selection</div>
<div class="t" style="left:250.2px;top:713.5px;font-size:14px;line-height:14px;color:#e6e6e6;font-weight:normal;letter-spacing:-0.104px;">Modes</div>
<div class="t" style="left:381.5px;top:728px;font-size:14px;line-height:14px;color:#cfcfcf;font-weight:normal;letter-spacing:-0.214px;">Contained</div>
<div class="t" style="left:493.9px;top:728px;font-size:14px;line-height:14px;color:#cfcfcf;font-weight:normal;letter-spacing:-0.416px;">Rectangle</div>
<div class="t" style="left:274.2px;top:797px;font-size:14px;line-height:14px;color:#e6e6e6;font-weight:normal;letter-spacing:-0.197px;">Immediate Selection</div>
<div class="t" style="left:4px;top:1003px;font-size:14px;line-height:14px;color:#ffffff;font-weight:normal;letter-spacing:-0.894px;">Ready</div>
<div class="t" style="left:1296.7px;top:1003px;font-size:14px;line-height:14px;color:#e6e6e6;font-weight:normal;letter-spacing:0.031px;">Model Units: mm / deg</div>
<div class="t" style="left:792.6px;top:964px;font-size:18px;line-height:18px;color:#f0f0f0;font-weight:normal;letter-spacing:0.927px;">Selected 2 wires</div>
<svg width="1921" height="1030" viewBox="0 0 1921 1030"><rect x="6" y="408.2" width="234" height="58.3" rx="3.5" stroke="#e8231c" stroke-width="4.2" fill="none"/></svg>
</body></html>
